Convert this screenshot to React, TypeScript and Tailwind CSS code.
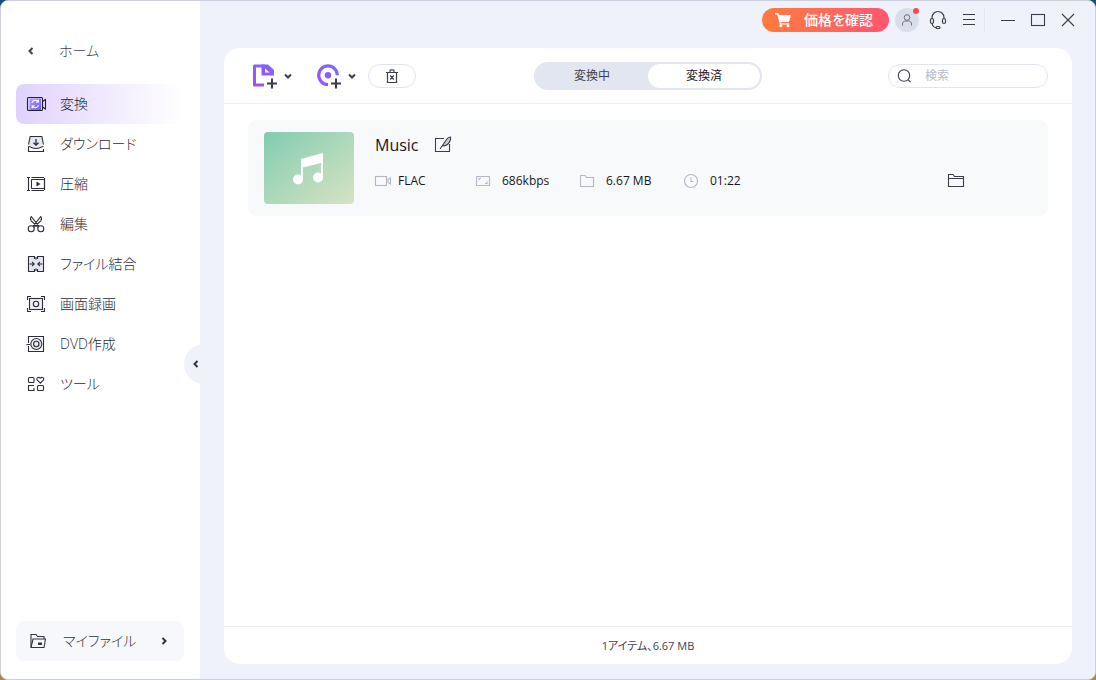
import { useState, type ReactNode } from 'react'

const NAV_ITEMS = [
  { id: 'convert', label: '変換', icon: <ConvertIcon /> },
  { id: 'download', label: 'ダウンロード', icon: <DownloadIcon /> },
  { id: 'compress', label: '圧縮', icon: <CompressIcon /> },
  { id: 'edit', label: '編集', icon: <ScissorsIcon /> },
  { id: 'merge', label: 'ファイル結合', icon: <MergeIcon /> },
  { id: 'record', label: '画面録画', icon: <RecordIcon /> },
  { id: 'dvd', label: 'DVD作成', icon: <DvdIcon /> },
  { id: 'tools', label: 'ツール', icon: <ToolsIcon /> },
]

const META = [
  { id: 'format', label: 'FLAC', icon: <VideoIcon /> },
  { id: 'bitrate', label: '686kbps', icon: <RatioIcon /> },
  { id: 'size', label: '6.67 MB', icon: <SizeIcon /> },
  { id: 'length', label: '01:22', icon: <ClockIcon /> },
]

function Icon({ children, className = 'size-5' }: { children: ReactNode; className?: string }) {
  return (
    <svg viewBox="0 0 20 20" fill="none" stroke="currentColor" strokeWidth="1.1" className={`shrink-0 ${className}`} aria-hidden="true">
      {children}
    </svg>
  )
}

function ConvertIcon() {
  return (
    <Icon>
      <defs>
        <linearGradient id="convertFill" x1="0" y1="0" x2="1" y2="1">
          <stop offset="0" stopColor="#b79cff" />
          <stop offset="1" stopColor="#6b5cf6" />
        </linearGradient>
      </defs>
      <rect x="3.5" y="4.5" width="11.5" height="11.5" fill="url(#convertFill)" stroke="none" />
      <rect x="1.5" y="3.5" width="15" height="13" rx="1" />
      <path d="M16.5 7.5l3-2v9.500l-3-2" />
      <path d="M6 9a3.300 3.300 0 0 1 6-1.300M12.500 11a3.300 3.300 0 0 1-6 1.300M12.300 5.800v2.200h-2.200M6.200 14.200V12h2.200" stroke="#fff" />
    </Icon>
  )
}

function DownloadIcon() {
  return (
    <Icon>
      <path d="M4.500 2.500h11l1.500 9-4 .5-1.500 2h-3L7 12l-4-.5z" fill="#e4e6f0" stroke="none" />
      <path d="M2.500 10.500l1.700-8h11.600l1.700 8" />
      <path d="M2.500 12.500c3 0 3.500 2 7.500 2s4.500-2 7.500-2" />
      <path d="M2.500 12.500v5h15v-2.500" />
      <path d="M10 5v6M7.500 8.700L10 11.200l2.500-2.500" strokeWidth="1.300" />
    </Icon>
  )
}

function CompressIcon() {
  return (
    <Icon>
      <path d="M1 3.500h3M1 16.500h3M2.500 3.500v13M5.500 3.500h12.500M5.500 16.500h12.500" />
      <rect x="5.500" y="5.500" width="13" height="9" rx=".5" />
      <path d="M10.500 7.500l4 2.500-4 2.500z" fill="currentColor" stroke="none" />
      <path d="M18.500 4v12" />
    </Icon>
  )
}

function ScissorsIcon() {
  return (
    <Icon>
      <circle cx="5.200" cy="14.700" r="3" />
      <circle cx="14.800" cy="14.700" r="3" />
      <path d="M7 12.300L14.700 2.500c1.300 1.500.8 3.200 0 4.300L8 13.300M13 12.300L5.300 2.500c-1.300 1.500-.8 3.200 0 4.300L12 13.300" />
    </Icon>
  )
}

function MergeIcon() {
  return (
    <Icon>
      <rect x="3" y="3" width="14" height="14" fill="#e4e6f0" stroke="none" />
      <path d="M8.500 5V2.500h-6v15h6V15M11.500 5V2.500h6v15h-6V15M10 3v2.500M10 14.500V17" />
      <path d="M3.500 10H8M6 7.800L8.200 10 6 12.200M16.500 10H12M14 7.800L11.800 10l2.200 2.200" />
    </Icon>
  )
}

function RecordIcon() {
  return (
    <Icon>
      <path d="M1.500 6V2.500H5M15 2.500h3.500V6M18.500 14v3.500H15M5 17.500H1.500V14" />
      <rect x="3.500" y="4.500" width="13" height="11" fill="#eff0f7" />
      <circle cx="10" cy="10" r="2.700" />
    </Icon>
  )
}

function DvdIcon() {
  return (
    <Icon>
      <path d="M2.500 9V2.500h15v15h-15V12M.5 10.500h3.500" />
      <circle cx="10.300" cy="10" r="5.500" fill="#e9eaf3" />
      <circle cx="10.300" cy="10" r="2.700" />
    </Icon>
  )
}

function ToolsIcon() {
  return (
    <Icon>
      <rect x="2.500" y="3.500" width="5.500" height="5" rx="1" />
      <rect x="11.500" y="11.500" width="6" height="5" rx="1" />
      <path d="M8 14v2.500H2.500v-5H8" />
      <path d="M14.300 9.200l-3.200-3.300c-1-1.700 1.200-3.700 3.200-1.700 2-2 4.200 0 3.200 1.700z" />
    </Icon>
  )
}

function VideoIcon() {
  return (
    <Icon>
      <rect x="3.500" y="5.500" width="11" height="9" />
      <path d="M16 8.500l2.500-1.500v6L16 11.500z" />
    </Icon>
  )
}

function RatioIcon() {
  return (
    <Icon>
      <rect x=".5" y="5.500" width="13" height="9" rx=".5" />
      <path d="M3 9.500V7.500h2M11 10.500v2H9" />
    </Icon>
  )
}

function SizeIcon() {
  return (
    <Icon>
      <path d="M.5 15.500v-11h4.500l1.500 2h7v9z" />
    </Icon>
  )
}

function ClockIcon() {
  return (
    <Icon>
      <circle cx="7" cy="10" r="6.500" />
      <path d="M7 6.500v4h2.500" />
    </Icon>
  )
}

function Chevron({ className = '' }: { className?: string }) {
  return (
    <svg viewBox="0 0 8 8" className={`size-2 shrink-0 ${className}`} fill="none" stroke="currentColor" strokeWidth="2" aria-hidden="true">
      <path d="M5.500 1L2.500 4l3 3" />
    </svg>
  )
}

function Sidebar() {
  const [active, setActive] = useState('convert')

  return (
    <aside className="relative flex w-[199px] shrink-0 flex-col bg-white px-4 pb-[18px] pl-[15px] pt-[30px] text-sm font-light">
      <button className="flex h-10 items-center pl-[11px] text-[#404150]">
        <Chevron />
        <span className="ml-6">ホーム</span>
      </button>

      <nav className="mt-[13px]">
        {NAV_ITEMS.map(item => (
          <button
            key={item.id}
            onClick={() => setActive(item.id)}
            className={`flex h-10 w-full items-center gap-[14px] rounded-lg pl-[10px] ${
              active === item.id
                ? 'bg-linear-to-r from-[#e0d2fd] to-white text-[#20212b]'
                : 'text-[#2b2c38]'
            }`}
          >
            {item.icon}
            <span>{item.label}</span>
          </button>
        ))}
      </nav>

      <button className="mt-auto flex h-10 items-center rounded-lg bg-[#f7f8fb] pl-3 pr-4 text-[#33343f]">
        <Icon>
          <path d="M3 16V3.500h5l1.500 2h6.500V8" />
          <path d="M3 16.500L5 8h12.500l-1.500 8.500z" />
          <path d="M10 11.500h4v2.500h-4z" fill="currentColor" stroke="none" />
        </Icon>
        <span className="ml-[15px]">マイファイル</span>
        <Chevron className="ml-auto rotate-180" />
      </button>

      {/* Collapse handle */}
      <button
        aria-label="サイドバーを閉じる"
        className="absolute -right-6 top-1/2 mt-1 flex size-10 items-center rounded-full bg-[#eff2fb] pl-2 text-[#33343f]"
      >
        <Chevron />
      </button>
    </aside>
  )
}

function TitleBar() {
  return (
    <header className="flex h-[47px] items-center justify-end pb-[10px] pr-3 text-[#3c3d4b]">
      <button className="flex h-6 items-center gap-3 rounded-full bg-linear-to-r from-[#ff7a3c] to-[#ff566f] pl-3 pr-4 text-sm font-medium text-white">
        <svg viewBox="0 0 18 16" className="h-4 w-[18px]" fill="currentColor" aria-hidden="true">
          <path d="M1 1h3.300l.8 2H17l-2 7H6.500l.4 1.200H15v1.300H5.800L3.300 2.500H1z" />
          <circle cx="6.800" cy="13.800" r="1.500" />
          <circle cx="14" cy="13.800" r="1.500" />
        </svg>
        価格を確認
      </button>

      <button aria-label="アカウント" className="relative ml-[6px] flex size-6 items-center justify-center rounded-full bg-[#d9deeb] text-[#6c7086]">
        <svg viewBox="0 0 16 16" className="size-4" fill="none" stroke="currentColor" aria-hidden="true">
          <circle cx="8" cy="5.500" r="2.800" />
          <path d="M3.500 13.500V12c0-2 1.500-3 3-3h3c1.500 0 3 1 3 3v1.500" />
        </svg>
        <span className="absolute top-0 right-0 size-1.5 rounded-full bg-[#ff4650]" />
      </button>

      <button aria-label="サポート" className="ml-[3px] flex h-6 w-8 items-center justify-center">
        <svg viewBox="0 0 18 20" className="h-5 w-[18px]" fill="none" stroke="currentColor" strokeWidth="1.200" aria-hidden="true">
          <path d="M3 8.500V7.500a6 6 0 0 1 12 0v1" />
          <rect x="1.500" y="8.500" width="3" height="5" rx="1.500" />
          <rect x="13.500" y="8.500" width="3" height="5" rx="1.500" />
          <path d="M3 13.500c.5 2.500 2 4 4.500 4.200" />
          <rect x="7" y="16.500" width="4" height="2" rx="1" />
        </svg>
      </button>

      <button aria-label="メニュー" className="flex h-6 w-[30px] items-center justify-center">
        <Icon>
          <path d="M4 4.500h12M4 9.500h12M4 14.500h12" strokeWidth="1.200" />
        </Icon>
      </button>

      <span className="mr-2 h-6 w-px bg-[#e3e6f0]" />

      <button aria-label="最小化" className="flex h-6 w-[30px] items-center justify-center">
        <Icon>
          <path d="M3 10.500h14" />
        </Icon>
      </button>
      <button aria-label="最大化" className="flex h-6 w-[30px] items-center justify-center">
        <Icon>
          <rect x="3.500" y="4.500" width="13" height="11" />
        </Icon>
      </button>
      <button aria-label="閉じる" className="flex h-6 w-[30px] items-center justify-center">
        <Icon>
          <path d="M4 4l12 12M16 4L4 16" />
        </Icon>
      </button>
    </header>
  )
}

function Toolbar({ tab, setTab }: { tab: string; setTab: (tab: string) => void }) {
  return (
    <div className="grid h-14 shrink-0 grid-cols-[1fr_auto_1fr] items-center border-b border-[#eeeff3] px-6">
      <div className="flex items-center text-[#3c3d4b]">
        <svg width="0" height="0" className="absolute" aria-hidden="true">
          <defs>
            <linearGradient id="accent" x1="0" y1="1" x2="1" y2="0">
              <stop offset="0" stopColor="#9c51f8" />
              <stop offset="1" stopColor="#7a6cff" />
            </linearGradient>
          </defs>
        </svg>

        <button aria-label="ファイルを追加" className="flex h-7 w-12 items-center justify-between pl-1 pr-1">
          <svg viewBox="0 0 26 26" className="size-[26px]" fill="none" aria-hidden="true">
            <path d="M12 22H2.500V3H13" stroke="url(#accent)" strokeWidth="3" strokeLinejoin="round" />
            <path d="M9.500 1.500h6.500L22 7v5.500H9.500z" fill="url(#accent)" />
            <path d="M13 5.500l4.500 4h-4.500z" fill="#fff" />
            <path d="M20 15.500v10M15 20.500h10" stroke="currentColor" strokeWidth="2" />
          </svg>
          <Chevron className="-rotate-90" />
        </button>

        <button aria-label="ディスクを追加" className="ml-4 flex h-7 w-12 items-center justify-between pl-1 pr-1">
          <svg viewBox="0 0 26 26" className="size-[26px]" fill="none" aria-hidden="true">
            <path d="M12 21.500a9.300 9.300 0 1 1 9.300-9.300" stroke="url(#accent)" strokeWidth="3.200" />
            <circle cx="12" cy="12.200" r="3.200" fill="#8c5ffb" />
            <path d="M20 15.500v10M15 20.500h10" stroke="currentColor" strokeWidth="2" />
          </svg>
          <Chevron className="-rotate-90" />
        </button>

        <button aria-label="すべて削除" className="ml-2 flex h-6 w-12 items-center justify-center rounded-full border border-[#e2e5ef]">
          <svg viewBox="0 0 14 16" className="h-4 w-[14px]" fill="none" stroke="currentColor" strokeWidth="1.200" aria-hidden="true">
            <path d="M1 4.500h12M5 4V2.500c0-1 4-1 4 0V4M2.500 4.500v10h9v-10M5.200 7.500l3.600 4M8.800 7.500l-3.600 4" />
          </svg>
        </button>
      </div>

      <div className="flex rounded-full bg-[#e1e6f0] p-0.5 text-xs">
        {[
          { id: 'converting', label: '変換中' },
          { id: 'converted', label: '変換済' },
        ].map(item => (
          <button
            key={item.id}
            onClick={() => setTab(item.id)}
            className={`h-6 w-28 rounded-full ${tab === item.id ? 'bg-white text-[#16171f]' : 'text-[#3c3d4b]'}`}
          >
            {item.label}
          </button>
        ))}
      </div>

      <label className="flex h-6 w-40 items-center justify-self-end rounded-full border border-[#e2e5ef] pl-[6px] text-[#3c3d4b]">
        <Icon>
          <circle cx="9" cy="9.500" r="5.700" />
          <path d="M13.200 13.800l2.400 2.400" />
        </Icon>
        <input
          type="text"
          aria-label="検索"
          placeholder="検索"
          className="ml-[10px] w-full min-w-0 bg-transparent text-xs outline-none placeholder:text-[#b8bccb]"
        />
      </label>
    </div>
  )
}

function FileRow() {
  return (
    <li className="flex rounded-lg bg-[#f8f9fb] px-4 py-3">
      <div className="flex h-[72px] w-[90px] shrink-0 items-center justify-center rounded bg-linear-to-br from-[#80ccb0] to-[#d6e3c3]">
        <svg viewBox="0 0 32 34" className="h-[34px] w-8" fill="#fff" aria-hidden="true">
          <path d="M8 8l22-6v24h-2V12L10 16.500V28H8z" />
          <circle cx="5" cy="28.500" r="5" />
          <circle cx="25" cy="26.500" r="5" />
        </svg>
      </div>

      <div className="ml-[18px] flex flex-1 flex-col gap-3 pt-px">
        <div className="flex h-6 items-center gap-[14px] pl-[3px]">
          <span className="text-base text-[#16171f]">Music</span>
          <button aria-label="名前を変更" className="text-[#3c3d4b]">
            <Icon>
              <path d="M11 3.500H2.500v13h14V9" />
              <path d="M7 14L13.500 4.500c1-1.500 2.500-2.500 4-2.500.5 2.500-1 5.500-3 7.500-1.500 1-3 1.500-5 1.500" fill="#c9cad3" />
            </Icon>
          </button>
        </div>
        <div className="flex h-6 items-center text-xs text-[#16171f]">
          {META.map(item => (
            <span key={item.id} className="flex w-[104px] items-center gap-[6px]">
              <span className="text-[#b4b6c6]">{item.icon}</span>
              {item.label}
            </span>
          ))}
          <button aria-label="フォルダーを開く" className="ml-auto mr-[66px] text-[#3c3d4b]">
            <Icon>
              <path d="M2.500 15.500v-12H7l1.500 2h9v10zM2.500 7.500h15" />
            </Icon>
          </button>
        </div>
      </div>
    </li>
  )
}

export default function App() {
  const [tab, setTab] = useState('converted')

  return (
    <div className="flex min-h-screen bg-linear-to-b from-[#12506a] to-[#a8884c] font-['Open_Sans','Noto_Sans_CJK_JP',sans-serif] [font-feature-settings:'palt']">
      <div className="flex flex-1 overflow-hidden rounded-lg border border-[#cdcede] bg-[#eff2fb]">
        <Sidebar />
        <main className="flex flex-1 flex-col">
          <TitleBar />
          <section className="mb-[15px] ml-6 mr-[23px] flex flex-1 flex-col rounded-2xl bg-white">
            <Toolbar tab={tab} setTab={setTab} />
            <ul className="flex-1 px-6 py-4">{tab === 'converted' && <FileRow />}</ul>
            <footer className="flex h-[38px] items-center justify-center border-t border-[#eeeff3] pt-px text-[11px] text-[#404150]">
              1アイテム、6.67 MB
            </footer>
          </section>
        </main>
      </div>
    </div>
  )
}
